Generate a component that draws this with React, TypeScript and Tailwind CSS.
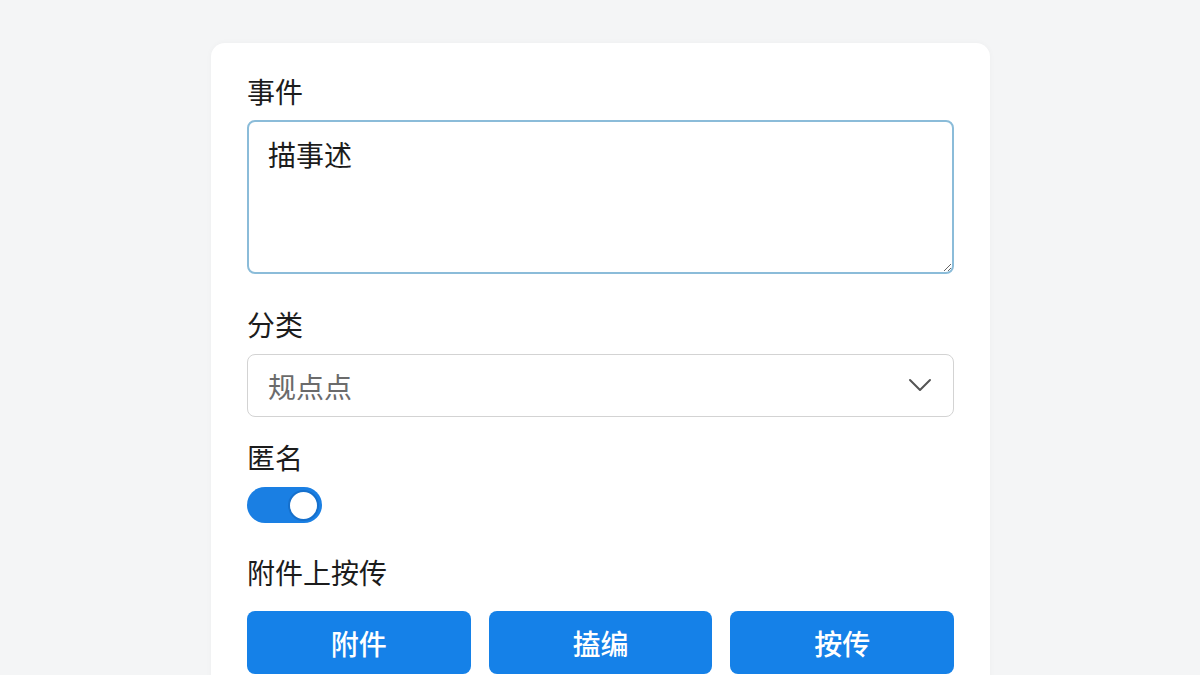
import React from "react";

export default function App() {
  const font = { fontFamily: '"Noto Sans CJK SC", "Noto Sans", sans-serif' };
  return (
    <div className="w-[1200px] h-[675px] overflow-hidden bg-[#f4f5f6]" style={font}>
      <div className="ml-[211px] mt-[43px] w-[779px] h-[700px] rounded-[14px] bg-white shadow-[0_0_6px_rgba(0,0,0,0.03)] px-[36px] pt-[29px]">
        <div className="text-[28px] leading-[38px] text-[#1c1c1c]">事件</div>
        <textarea
          defaultValue="描事述"
          className="mt-[10px] block w-full h-[154px] rounded-[8px] border-2 border-[#8bbcd9] px-[19px] py-[13px] text-[28px] leading-[38px] text-[#1c1c1c] outline-none resize-y"
          style={font}
        />
        <div className="mt-[31px] text-[28px] leading-[38px] text-[#1c1c1c]">分类</div>
        <div className="mt-[11px] h-[63px] rounded-[8px] border border-[#d3d3d3] flex items-center justify-between pl-[20px] pr-[21px]">
          <span className="text-[28px] text-[#6b6b6b]">规点点</span>
          <svg width="24" height="15" viewBox="0 0 24 15" fill="none">
            <polyline points="2,2 12,12 22,2" stroke="#555" strokeWidth="2" strokeLinecap="round" strokeLinejoin="round" />
          </svg>
        </div>
        <div className="mt-[21px] text-[28px] leading-[38px] text-[#1c1c1c]">匿名</div>
        <div className="mt-[11px] w-[75px] h-[36px] rounded-full bg-[#1a7fe3] flex items-center justify-end pr-[3px]">
          <div className="w-[31px] h-[31px] rounded-full bg-white border-2 border-[#1670cc]" />
        </div>
        <div className="mt-[30px] text-[28px] leading-[38px] text-[#1c1c1c]">附件上按传</div>
        <div className="mt-[20px] grid grid-cols-3 gap-[18px]">
          {["附件", "搕编", "按传"].map((t) => (
            <button
              key={t}
              className="h-[63px] rounded-[8px] bg-[#1581e8] text-white text-[28px] font-medium"
              style={font}
            >
              {t}
            </button>
          ))}
        </div>
      </div>
    </div>
  );
}
